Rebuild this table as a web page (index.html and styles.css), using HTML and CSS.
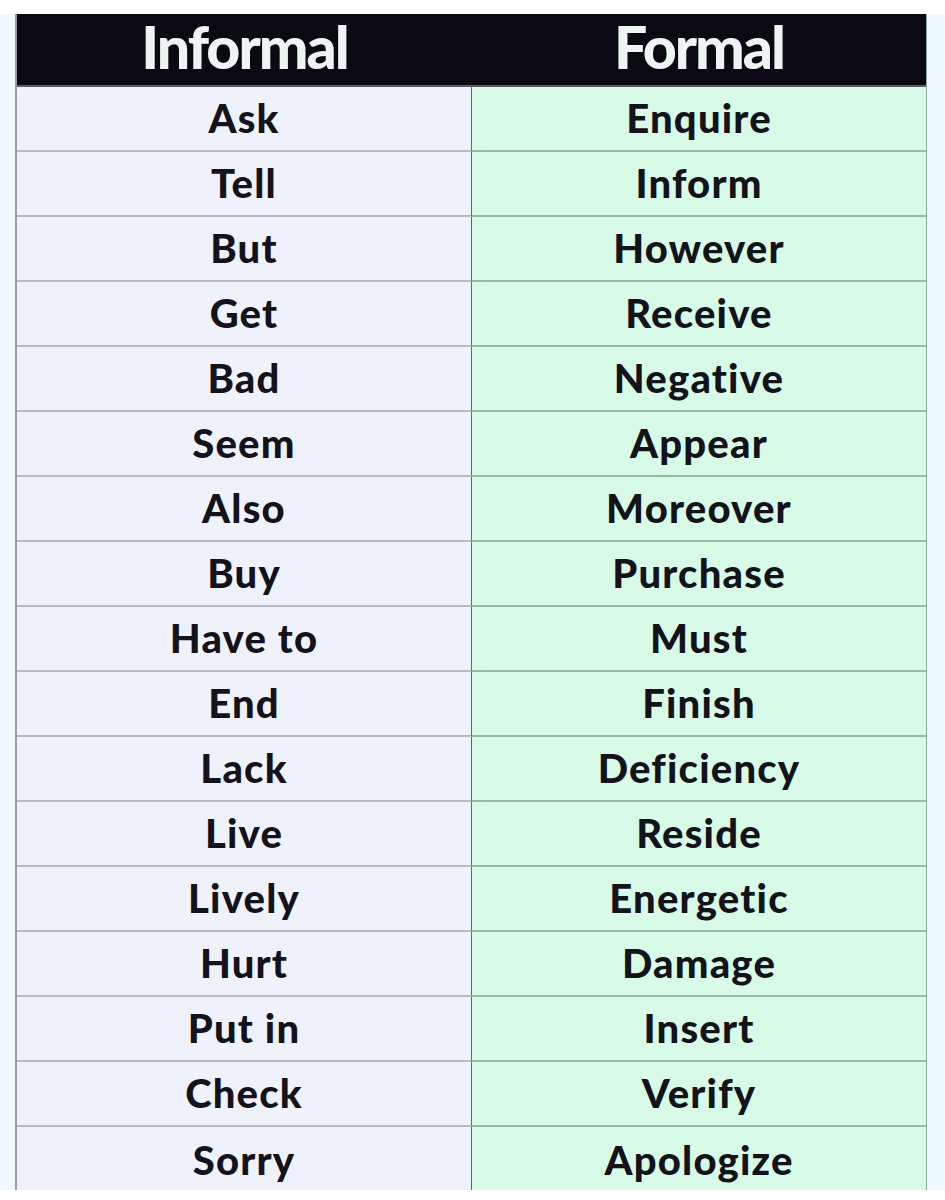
FILE: index.html
```html
<!DOCTYPE html>
<html lang="en">
<head>
<meta charset="utf-8">
<title>Informal vs Formal</title>
<link rel="stylesheet" href="styles.css">
</head>
<body>
<div class="page">
  <div class="table">
    <div class="head">Informal</div>
    <div class="head">Formal</div>
    <div class="cell inf">Ask</div><div class="cell fml">Enquire</div>
    <div class="cell inf">Tell</div><div class="cell fml">Inform</div>
    <div class="cell inf">But</div><div class="cell fml">However</div>
    <div class="cell inf">Get</div><div class="cell fml">Receive</div>
    <div class="cell inf">Bad</div><div class="cell fml">Negative</div>
    <div class="cell inf">Seem</div><div class="cell fml">Appear</div>
    <div class="cell inf">Also</div><div class="cell fml">Moreover</div>
    <div class="cell inf">Buy</div><div class="cell fml">Purchase</div>
    <div class="cell inf">Have to</div><div class="cell fml">Must</div>
    <div class="cell inf">End</div><div class="cell fml">Finish</div>
    <div class="cell inf">Lack</div><div class="cell fml">Deficiency</div>
    <div class="cell inf">Live</div><div class="cell fml">Reside</div>
    <div class="cell inf">Lively</div><div class="cell fml">Energetic</div>
    <div class="cell inf">Hurt</div><div class="cell fml">Damage</div>
    <div class="cell inf">Put in</div><div class="cell fml">Insert</div>
    <div class="cell inf">Check</div><div class="cell fml">Verify</div>
    <div class="cell inf last">Sorry</div><div class="cell fml last">Apologize</div>
  </div>
</div>
</body>
</html>
```
FILE: styles.css
```css
html, body {
  margin: 0;
  padding: 0;
  background: #ffffff;
}
.page {
  background: linear-gradient(#ffffff 0, #ffffff 14px, #eefafc 14px);
  padding: 14px 18px 0 15px;
}
.table {
  display: grid;
  grid-template-columns: 455px 454px;
  grid-template-rows: 73px repeat(16, 65px) 63px;
  font-family: "Lato", "DejaVu Sans", sans-serif;
  border-left: 2px solid #9a9aa4;
  border-right: 1px solid #8fa99c;
  box-sizing: border-box;
  width: 912px;
}
.head {
  background: #0b0a12;
  color: #eef3f4;
  font-family: "Lato", "Liberation Sans", sans-serif;
  font-weight: 900;
  font-size: 59px;
  line-height: 64px;
  letter-spacing: -2px;
  display: flex;
  align-items: center;
  justify-content: center;
  padding-bottom: 5px;
  box-sizing: border-box;
  border-bottom: 2px solid #5d5d66;
}
.cell {
  display: flex;
  align-items: center;
  justify-content: center;
  font-weight: 900;
  font-size: 40px;
  color: #14131c;
  letter-spacing: 1.2px;
  box-sizing: border-box;
  padding-bottom: 2px;
}
.inf {
  background: #f0f2fb;
  border-bottom: 2px solid #bcb8c8;
  border-right: 1px solid #5e6468;
}
.fml {
  background: #d7fbe7;
  border-bottom: 2px solid #93bca5;
}
.last {
  border-bottom: none;
  padding-bottom: 0;
  padding-top: 2px;
}
```
